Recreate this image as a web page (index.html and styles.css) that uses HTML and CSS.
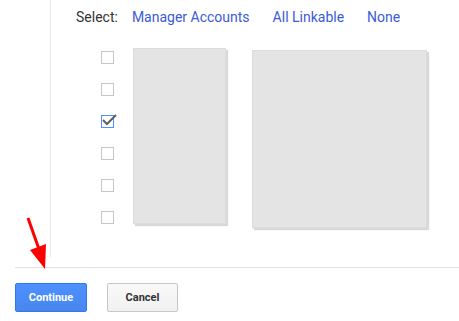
FILE: index.html
```html
<!DOCTYPE html>
<html>
<head>
  <title>Link Accounts</title>
  <link rel="stylesheet" href="styles.css">
</head>
<body>
  <div class="page">
    <div class="panel">
      <div class="select-row">
        <span class="select-label">Select:</span>
        <a href="#" class="select-link">Manager Accounts</a>
        <a href="#" class="select-link">All Linkable</a>
        <a href="#" class="select-link">None</a>
      </div>
      <div class="lists">
        <div class="checks">
          <span class="check"></span>
          <span class="check"></span>
          <span class="check checked">
            <svg class="tick" width="16" height="14" viewBox="0 0 16 14">
              <path d="M1 7 L5 11 L14 2" fill="none" stroke="#5f5f5f" stroke-width="2"/>
            </svg>
          </span>
          <span class="check"></span>
          <span class="check"></span>
          <span class="check"></span>
        </div>
        <div class="placeholder narrow"></div>
        <div class="placeholder wide"></div>
      </div>
    </div>
    <div class="footer">
      <button class="btn primary">Continue</button>
      <button class="btn cancel">Cancel</button>
    </div>
  </div>

  <svg class="arrow" width="40" height="60" viewBox="0 0 40 60">
    <line x1="8" y1="2" x2="20" y2="36" stroke="#f00" stroke-width="3"/>
    <polygon points="10,34 26,28 25,53" fill="#f00"/>
  </svg>
</body>
</html>
```
FILE: styles.css
```css
body {
  margin: 0;
  font-family: Roboto, 'Liberation Sans', sans-serif;
  background: #fff;
  position: relative;
  width: 459px;
  height: 321px;
  overflow: hidden;
}
.page {
  padding-left: 15px;
}
.panel {
  margin-left: 35px;
  border-left: 1px solid #e8e8e8;
  height: 257px;
  box-sizing: border-box;
}
.select-row {
  display: flex;
  align-items: center;
  height: 34px;
  padding-left: 25px;
  font-size: 14px;
}
.select-label {
  color: #333;
  margin-right: 14px;
}
.select-link {
  color: #3c5bd6;
  text-decoration: none;
  margin-right: 23px;
}
.lists {
  display: flex;
  align-items: flex-start;
  margin-top: 14px;
  padding-left: 50px;
}
.checks {
  display: flex;
  flex-direction: column;
  gap: 19px;
  margin-top: 3px;
  width: 32px;
}
.check {
  display: block;
  width: 11px;
  height: 11px;
  border: 1px solid #c6c6c6;
  position: relative;
}
.check.checked {
  border-color: #4d90fe;
}
.tick {
  position: absolute;
  left: 0;
  top: -3px;
}
.placeholder {
  background: #e4e4e4;
  border: 1px solid #dcdcdc;
  box-shadow: 2px 2px 1px #d8d8d8;
}
.narrow {
  width: 91px;
  height: 174px;
}
.wide {
  width: 173px;
  height: 176px;
  margin-left: 26px;
  margin-top: 2px;
}
.footer {
  border-top: 1px solid #e0e0e0;
  margin-top: 10px;
  padding-top: 15px;
  display: flex;
  gap: 20px;
}
.btn {
  height: 29px;
  width: 72px;
  padding: 0;
  font-family: Roboto, 'Liberation Sans', sans-serif;
  font-size: 11px;
  font-weight: bold;
  color: #333;
  background: linear-gradient(#f8f8f8, #f1f1f1);
  border: 1px solid #c6c6c6;
  border-radius: 2px;
}
.btn.cancel {
  width: 71px;
}
.btn.primary {
  color: #fff;
  background: linear-gradient(#4d90fe, #4787ed);
  border-color: #3079ed;
}
.arrow {
  position: absolute;
  left: 20px;
  top: 216px;
}
```
